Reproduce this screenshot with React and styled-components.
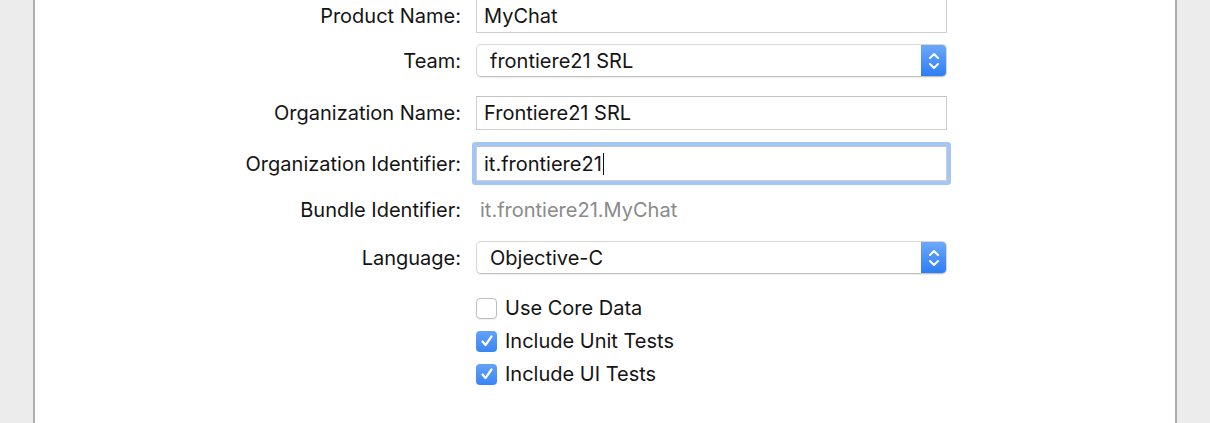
import React from 'react';
import styled, { createGlobalStyle } from 'styled-components';

const GlobalStyle = createGlobalStyle`
  html, body {
    margin: 0;
    padding: 0;
    background: #ececec;
    overflow: hidden;
  }
  body {
    font-family: Inter, "Liberation Sans", Arial, sans-serif;
    -webkit-font-smoothing: antialiased;
  }
`;

const Window = styled.div`
  height: 423px;
  margin: 0 33px;
  background: #ffffff;
  border-left: 2px solid #acacac;
  border-right: 2px solid #acacac;
  overflow: hidden;
`;

const Form = styled.div`
  display: flex;
  flex-direction: column;
  margin-top: -1px;
`;

const Row = styled.div`
  display: grid;
  grid-template-columns: 426px 471px;
  column-gap: 15px;
  align-items: center;
  height: ${p => p.$h}px;
  margin-top: ${p => p.$gap || 0}px;
`;

const Label = styled.div`
  text-align: right;
  font-size: 20px;
  color: #141414;
  white-space: nowrap;
`;

const TextField = styled.div`
  box-sizing: border-box;
  height: 100%;
  display: flex;
  align-items: center;
  padding: 0 7px;
  border: 1px solid #cfcfcf;
  border-top-color: #c4c4c4;
  background: #fff;
  font-size: 20px;
  color: #141414;
  box-shadow: ${p => (p.$focused ? '0 0 0 4px #a4c6f4' : 'none')};
  border-radius: ${p => (p.$focused ? '1px' : '0')};
`;

const Caret = styled.span`
  display: inline-block;
  width: 1.5px;
  height: 22px;
  margin-left: 1px;
  background: #111;
  vertical-align: middle;
`;

const Select = styled.div`
  box-sizing: border-box;
  height: 100%;
  display: flex;
  align-items: stretch;
  border: 1px solid #d6d6d6;
  border-bottom-color: #c2c2c2;
  border-radius: 5px;
  background: #fff;
  box-shadow: 0 1px 1px rgba(0, 0, 0, 0.08);
  overflow: hidden;
`;

const SelectValue = styled.div`
  flex: 1;
  display: flex;
  align-items: center;
  padding-left: 13px;
  font-size: 20px;
  color: #141414;
`;

const Stepper = styled.div`
  width: 26px;
  margin: -1px -1px -1px 0;
  display: flex;
  align-items: center;
  justify-content: center;
  background: linear-gradient(to bottom, #6eaaf8, #2b7cf6);
`;

const Plain = styled.div`
  padding-left: 4px;
  font-size: 20px;
  color: #8a8a8a;
`;

const CheckRow = styled.label`
  grid-column: 2;
  display: flex;
  align-items: center;
  gap: 8px;
  font-size: 20px;
  color: #141414;
`;

const Box = styled.span`
  box-sizing: border-box;
  flex: none;
  width: 21px;
  height: 21px;
  border-radius: 4px;
  display: flex;
  align-items: center;
  justify-content: center;
  border: ${p => (p.$checked ? 'none' : '1px solid #bdbdbd')};
  background: ${p => (p.$checked ? 'linear-gradient(to bottom, #62a2f8, #3a86f4)' : '#fff')};
  box-shadow: ${p => (p.$checked ? 'none' : '0 1px 1px rgba(0,0,0,0.06)')};
`;

const Chevrons = () => (
  <svg width="14" height="22" viewBox="0 0 14 22" fill="none" stroke="#fff" strokeWidth="2" strokeLinecap="round" strokeLinejoin="round">
    <path d="M3 8 L7 4 L11 8" />
    <path d="M3 14 L7 18 L11 14" />
  </svg>
);

const Check = () => (
  <svg width="14" height="14" viewBox="0 0 14 14" fill="none" stroke="#fff" strokeWidth="2.2" strokeLinecap="round" strokeLinejoin="round">
    <path d="M2.5 7.5 L5.5 11 L11.5 2.5" />
  </svg>
);

const Checkbox = ({ checked, children, gap }) => (
  <Row $h={21} $gap={gap}>
    <CheckRow>
      <Box $checked={checked}>{checked && <Check />}</Box>
      {children}
    </CheckRow>
  </Row>
);

export default function App() {
  return (
    <>
      <GlobalStyle />
      <Window>
        <Form>
          <Row $h={34}>
            <Label>Product Name:</Label>
            <TextField>MyChat</TextField>
          </Row>
          <Row $h={33} $gap={11}>
            <Label>Team:</Label>
            <Select>
              <SelectValue>frontiere21 SRL</SelectValue>
              <Stepper><Chevrons /></Stepper>
            </Select>
          </Row>
          <Row $h={34} $gap={19}>
            <Label>Organization Name:</Label>
            <TextField>Frontiere21 SRL</TextField>
          </Row>
          <Row $h={35} $gap={16}>
            <Label>Organization Identifier:</Label>
            <TextField $focused>it.frontiere21<Caret /></TextField>
          </Row>
          <Row $h={24} $gap={17}>
            <Label>Bundle Identifier:</Label>
            <Plain>it.frontiere21.MyChat</Plain>
          </Row>
          <Row $h={33} $gap={19}>
            <Label>Language:</Label>
            <Select>
              <SelectValue>Objective-C</SelectValue>
              <Stepper><Chevrons /></Stepper>
            </Select>
          </Row>
          <Checkbox gap={22}>Use Core Data</Checkbox>
          <Checkbox checked gap={12}>Include Unit Tests</Checkbox>
          <Checkbox checked gap={12}>Include UI Tests</Checkbox>
        </Form>
      </Window>
    </>
  );
}
